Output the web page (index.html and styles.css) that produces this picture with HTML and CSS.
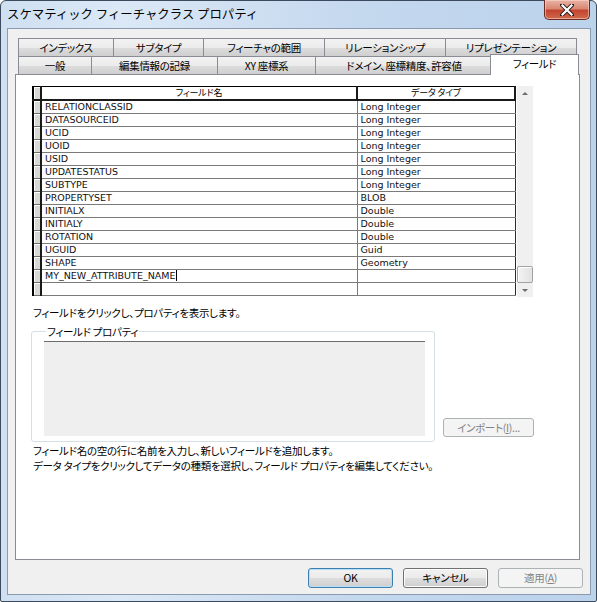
FILE: index.html
```html
<!DOCTYPE html>
<html lang="ja">
<head>
<meta charset="utf-8">
<title>スケマティック フィーチャクラス プロパティ</title>
<link rel="stylesheet" href="styles.css">
</head>
<body>
<div class="window">
  <div class="titlebar">
    <div class="title">スケマティック フィーチャクラス プロパティ</div>
    <div class="close-btn">
      <svg width="14" height="12" viewBox="0 0 14 12"><path d="M2 1 L12 11 M12 1 L2 11" stroke="#2b1a1a" stroke-width="4" stroke-linecap="square"/><path d="M2.5 1.5 L11.5 10.5 M11.5 1.5 L2.5 10.5" stroke="#ffffff" stroke-width="2.2" stroke-linecap="square"/></svg>
    </div>
  </div>
  <div class="frame">
    <div class="client">
      <div class="tabs">
        <div class="tab-row back">
          <div class="tab w95">インデックス</div>
          <div class="tab w90">サブタイプ</div>
          <div class="tab w122">フィーチャの範囲</div>
          <div class="tab w122">リレーションシップ</div>
          <div class="tab w132">リプレゼンテーション</div>
        </div>
        <div class="tab-row front">
          <div class="tab w74">一般</div>
          <div class="tab w127">編集情報の記録</div>
          <div class="tab w99">XY 座標系</div>
          <div class="tab w178">ドメイン、座標精度、許容値</div>
          <div class="tab selected">フィールド</div>
        </div>
      </div>
      <div class="panel">
        <div class="grid-wrap">
          <table class="grid">
            <colgroup><col class="c0"><col class="c1"><col class="c2"></colgroup>
            <thead>
              <tr><th class="rh"></th><th>フィールド名</th><th>データ タイプ</th></tr>
            </thead>
            <tbody>
              <tr><td class="rh"></td><td>RELATIONCLASSID</td><td>Long Integer</td></tr>
              <tr><td class="rh"></td><td>DATASOURCEID</td><td>Long Integer</td></tr>
              <tr><td class="rh"></td><td>UCID</td><td>Long Integer</td></tr>
              <tr><td class="rh"></td><td>UOID</td><td>Long Integer</td></tr>
              <tr><td class="rh"></td><td>USID</td><td>Long Integer</td></tr>
              <tr><td class="rh"></td><td>UPDATESTATUS</td><td>Long Integer</td></tr>
              <tr><td class="rh"></td><td>SUBTYPE</td><td>Long Integer</td></tr>
              <tr><td class="rh"></td><td>PROPERTYSET</td><td>BLOB</td></tr>
              <tr><td class="rh"></td><td>INITIALX</td><td>Double</td></tr>
              <tr><td class="rh"></td><td>INITIALY</td><td>Double</td></tr>
              <tr><td class="rh"></td><td>ROTATION</td><td>Double</td></tr>
              <tr><td class="rh"></td><td>UGUID</td><td>Guid</td></tr>
              <tr><td class="rh"></td><td>SHAPE</td><td>Geometry</td></tr>
              <tr><td class="rh"></td><td>MY_NEW_ATTRIBUTE_NAME<span class="caret"></span></td><td></td></tr>
              <tr><td class="rh"></td><td></td><td></td></tr>
            </tbody>
          </table>
          <div class="vscroll">
            <div class="sb-btn"><span class="arrow-up"></span></div>
            <div class="sb-track"></div>
            <div class="sb-thumb"></div>
            <div class="sb-btn"><span class="arrow-down"></span></div>
          </div>
        </div>
        <p class="hint">フィールドをクリックし、プロパティを表示します。</p>
        <div class="props-row">
          <fieldset class="groupbox">
            <legend>フィールド プロパティ</legend>
            <div class="props-area"></div>
          </fieldset>
          <div class="btn disabled import">インポート(<u>I</u>)...</div>
        </div>
        <p class="help">フィールド名の空の行に名前を入力し、新しいフィールドを追加します。</p>
        <p class="help">データ タイプをクリックしてデータの種類を選択し、フィールド プロパティを編集してください。</p>
      </div>
      <div class="buttons">
        <div class="btn default">OK</div>
        <div class="btn">キャンセル</div>
        <div class="btn disabled">適用(<u>A</u>)</div>
      </div>
    </div>
  </div>
</div>
</body>
</html>
```

FILE: styles.css
```css
html, body {
  margin: 0;
  padding: 0;
  width: 597px;
  height: 602px;
  overflow: hidden;
  background: #ffffff;
}

.window {
  box-sizing: border-box;
  width: 597px;
  height: 602px;
  border: 1px solid #3b4a5c;
  border-radius: 6px 6px 2px 2px;
  background: linear-gradient(to right, #cfe0f2 0%, #dbe8f6 20%, #c4d8ee 60%, #bcd3ec 100%);
  display: flex;
  flex-direction: column;
  font-family: "Noto Sans CJK JP", sans-serif;
  color: #000;
}

.titlebar {
  height: 27px;
  display: flex;
  align-items: flex-start;
  flex: none;
}

.title {
  padding: 3px 0 0 6px;
  font-size: 12.4px;
  line-height: 20px;
  color: #000;
  white-space: nowrap;
}

.close-btn {
  margin-left: auto;
  margin-right: 6px;
  margin-top: -1px;
  width: 46px;
  height: 20px;
  box-sizing: border-box;
  border: 1px solid #6b2a22;
  border-top: none;
  border-radius: 0 0 5px 5px;
  background: linear-gradient(to bottom, #e8b3a6 0%, #d98873 45%, #c4452f 55%, #cf6a4c 100%);
  box-shadow: inset 0 0 0 1px rgba(255, 220, 210, 0.55);
  display: flex;
  align-items: center;
  justify-content: center;
}

.frame {
  flex: 1;
  display: flex;
  padding: 0 5px 6px 6px;
  min-height: 0;
}

.client {
  flex: 1;
  border: 1px solid #8a9bb0;
  background: #f0f0f0;
  display: flex;
  flex-direction: column;
  font-size: 10.5px;
  letter-spacing: -0.3px;
  font-feature-settings: "palt";
}

/* ---------- tabs ---------- */
.tabs {
  padding: 9px 0 0 10px;
  display: flex;
  flex-direction: column;
}

.tab-row {
  display: flex;
  height: 18px;
}

.tab {
  box-sizing: border-box;
  height: 18px;
  border: 1px solid #898c95;
  border-bottom: none;
  margin-left: -1px;
  background: linear-gradient(to bottom, #f2f2f2 0%, #ebebeb 50%, #dddddd 51%, #cfcfcf 100%);
  display: flex;
  align-items: center;
  justify-content: center;
  white-space: nowrap;
  font-size: 10.5px;
  line-height: 14px;
  padding-top: 1px;
}

.tab:first-child { margin-left: 0; }

.w74 { width: 74px; }
.w90 { width: 91px; }
.w95 { width: 96px; }
.w99 { width: 99px; }
.w122 { width: 122px; }
.w127 { width: 127px; }
.w132 { width: 132px; }
.w178 { width: 178px; }

.tab.selected {
  width: 89px;
  height: 21px;
  margin-top: -2px;
  margin-left: -3px;
  margin-bottom: -1px;
  background: #ffffff;
  position: relative;
  z-index: 2;
  padding-top: 0;
  padding-bottom: 3px;
}

/* ---------- panel ---------- */
.panel {
  box-sizing: border-box;
  margin-left: 7px;
  width: 565px;
  height: 486px;
  border: 1px solid #898c95;
  background: #ffffff;
  padding: 11px 0 0 16px;
  position: relative;
  z-index: 1;
}

.grid-wrap {
  display: flex;
  align-items: flex-start;
  height: 211px;
}

.grid {
  border-collapse: collapse;
  table-layout: fixed;
  width: 484px;
  font-family: "DejaVu Sans", sans-serif;
  font-size: 9.5px;
  letter-spacing: 0;
  font-feature-settings: normal;
  border-top: 1px solid #000;
  border-left: 2px solid #000;
}

.c0 { width: 8px; }
.c1 { width: 316px; }
.c2 { width: 158px; }

.grid th {
  height: 12px;
  padding: 0;
  background: #ffffff;
  border-right: 2px solid #1a1a1a;
  border-bottom: 2px solid #1a1a1a;
  font-family: "Noto Sans CJK JP", sans-serif;
  font-feature-settings: "palt";
  font-weight: normal;
  font-size: 9px;
  letter-spacing: -0.2px;
  line-height: 12px;
  text-align: center;
  box-shadow: inset 1px 1px 0 #ffffff;
}

.grid td {
  height: 12px;
  padding: 0 0 0 3px;
  line-height: 12px;
  border-right: 1px solid #7a7a7a;
  border-bottom: 1px solid #7a7a7a;
  white-space: nowrap;
  overflow: hidden;
  color: #111;
}

.grid td:last-child { border-right: 1px solid #2a2a2a; }

.grid .rh {
  padding: 0;
  background: #d8d8d4;
  border-right: 2px solid #1a1a1a;
  box-shadow: inset 1px 1px 0 #ffffff;
}

.grid td.rh { border-bottom: 1px solid #6e6e6e; }

.caret {
  display: inline-block;
  width: 1px;
  height: 11px;
  background: #000;
  vertical-align: -2px;
  margin-left: 1px;
}

.vscroll {
  margin-left: 1px;
  width: 16px;
  height: 211px;
  background: #f0f0f0;
  display: flex;
  flex-direction: column;
}

.sb-btn {
  height: 14px;
  display: flex;
  align-items: center;
  justify-content: center;
  flex: none;
}

.sb-track { flex: 1; }

.sb-thumb {
  box-sizing: border-box;
  height: 17px;
  border: 1px solid #a3a3a3;
  border-radius: 2px;
  background: linear-gradient(to right, #f3f3f3, #e2e2e2);
  box-shadow: inset 1px 1px 0 #ffffff;
}

.arrow-up, .arrow-down {
  width: 0;
  height: 0;
  border-left: 3px solid transparent;
  border-right: 3px solid transparent;
}
.arrow-up { border-bottom: 3px solid #6b6b6b; }
.arrow-down { border-top: 3px solid #6b6b6b; }

.hint {
  margin: 9px 0 0 1px;
  line-height: 13px;
}

.props-row {
  display: flex;
  align-items: flex-end;
  margin-top: 6px;
}

.groupbox {
  box-sizing: border-box;
  margin: 0 0 0 -1px;
  width: 404px;
  height: 117px;
  border: 1px solid #d5dfe5;
  border-radius: 3px;
  padding: 3px 9px 6px 12px;
  min-width: 0;
}

.groupbox legend {
  padding: 0 1px;
  margin-left: 2px;
  line-height: 13px;
}

.props-area {
  height: 94px;
  background: #efefef;
  border-top: 1px solid #6d6d6d;
}

.btn {
  box-sizing: border-box;
  width: 85px;
  height: 20px;
  border: 1px solid #707070;
  border-radius: 3px;
  background: linear-gradient(to bottom, #f2f2f2 0%, #ebebeb 50%, #dddddd 51%, #cfcfcf 100%);
  box-shadow: inset 0 0 0 1px #fcfcfc;
  display: flex;
  align-items: center;
  justify-content: center;
  line-height: 14px;
  white-space: nowrap;
}

.btn u { text-decoration: underline; text-underline-offset: 1px; }

.btn.disabled {
  border-color: #adb2b5;
  background: #f4f4f4;
  box-shadow: none;
  color: #838383;
}

.btn.import {
  width: 91px;
  height: 19px;
  margin: 0 0 5px 8px;
}

.btn.default {
  border-color: #3c7fb1;
  box-shadow: inset 0 0 0 1px #b6e0f7;
}

.help {
  margin: 0 0 0 1px;
  line-height: 15px;
}

.props-row + .help { margin-top: 1px; }

.buttons {
  display: flex;
  justify-content: flex-end;
  gap: 10px;
  padding: 8px 7px 0 0;
}
```
